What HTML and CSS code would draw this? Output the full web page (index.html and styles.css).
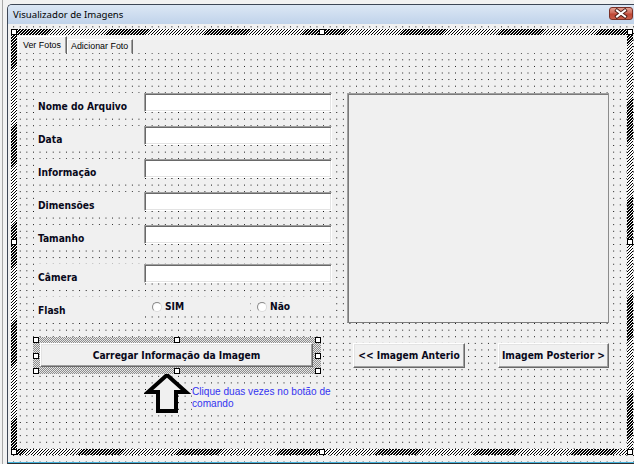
FILE: index.html
```html
<!DOCTYPE html>
<html lang="pt">
<head>
<meta charset="utf-8">
<title>Visualizador de Imagens</title>
<link rel="stylesheet" href="styles.css">
</head>
<body>
<div class="desk">
  <div class="gutter"></div>
  <div class="window">
    <div class="titlebar">
      <span class="title">Visualizador de Imagens</span>
      <div class="close">
        <svg width="22" height="11" viewBox="0 0 22 11">
          <path d="M7 2.5 L15 8.5 M15 2.5 L7 8.5" stroke="#4a1c16" stroke-width="3.8" stroke-linecap="square" fill="none"/>
          <path d="M7 2.5 L15 8.5 M15 2.5 L7 8.5" stroke="#ffffff" stroke-width="2" stroke-linecap="square" fill="none"/>
        </svg>
      </div>
    </div>
    <div class="client grid">
      <div class="mp-sel">
        <span class="h h-tl"></span><span class="h h-tm"></span><span class="h h-tr"></span>
        <span class="h h-ml"></span><span class="h h-mr"></span>
        <span class="h h-bl"></span><span class="h h-bm"></span><span class="h h-br"></span>
        <div class="mp">
          <div class="tabs">
            <div class="tab tab-active">Ver Fotos</div>
            <div class="tab tab-add">Adicionar Foto</div>
          </div>
          <div class="page grid">
            <div class="col-left">
              <div class="row"><div class="lbl">Nome do Arquivo</div><div class="txt"></div></div>
              <div class="row"><div class="lbl">Data</div><div class="txt"></div></div>
              <div class="row"><div class="lbl">Informação</div><div class="txt"></div></div>
              <div class="row"><div class="lbl">Dimensões</div><div class="txt"></div></div>
              <div class="row"><div class="lbl">Tamanho</div><div class="txt"></div></div>
              <div class="row row-cam"><div class="lbl">Câmera</div><div class="txt"></div></div>
              <div class="row"><div class="lbl">Flash</div>
                <div class="opts">
                  <div class="opt opt-sim"><span class="radio"></span>SIM</div>
                  <div class="opt opt-nao"><span class="radio"></span>Não</div>
                </div>
              </div>
              <div class="btn-sel">
                <span class="h h-tl"></span><span class="h h-tm"></span><span class="h h-tr"></span>
                <span class="h h-ml"></span><span class="h h-mr"></span>
                <span class="h h-bl"></span><span class="h h-bm"></span><span class="h h-br"></span>
                <div class="btn btn-load">Carregar Informação da Imagem</div>
              </div>
              <div class="hint">
                <svg class="arrow" width="48" height="44" viewBox="0 0 48 44">
                  <polygon points="23,4 42,21 32,21 32,40 14,40 14,21 4,21" fill="#f0f0f0" stroke="#000" stroke-width="4" stroke-linejoin="miter"/>
                </svg>
                <div class="note">Clique duas vezes no botão de comando</div>
              </div>
            </div>
            <div class="col-right">
              <div class="picture"></div>
              <div class="nav">
                <div class="btn btn-prev">&lt;&lt; Imagem Anterio</div>
                <div class="btn btn-next">Imagem Posterior &gt;</div>
              </div>
            </div>
          </div>
        </div>
      </div>
    </div>
  </div>
</div>
</body>
</html>
```
FILE: styles.css
```css
* { box-sizing: border-box; }
html, body { margin: 0; padding: 0; }
body {
  width: 634px;
  height: 464px;
  overflow: hidden;
  background: #f2f2f2;
  font-family: "Liberation Sans", Arial, sans-serif;
  color: #000;
}
.desk {
  display: flex;
  width: 634px;
  height: 464px;
  background: #f2f2f2;
}
.gutter {
  flex: none;
  width: 5px;
  margin-left: 2px;
  border-left: 1px solid #a7a7a7;
}
.window {
  flex: none;
  width: 627px;
  height: 460px;
  margin-top: 4px;
  border-top: 1px solid #3e4756;
  border-left: 1px solid #3e4756;
  border-bottom: 1px solid #2e2e2e;
  border-top-left-radius: 5px;
  background: #c9daee;
  display: flex;
  flex-direction: column;
  overflow: hidden;
}
.titlebar {
  flex: none;
  height: 19px;
  display: flex;
  justify-content: space-between;
  align-items: flex-start;
  padding-left: 5px;
  background: linear-gradient(#dce7f5, #c0d3ea);
}
.title {
  font-family: "Noto Sans", "Liberation Sans", sans-serif;
  font-size: 9.6px;
  line-height: 20px;
  white-space: nowrap;
}
.close {
  width: 24px;
  height: 13px;
  margin: 2px 1px 0 0;
  border: 1px solid #7a3026;
  border-radius: 3px;
  background: linear-gradient(#e3a193, #cf6a59 45%, #bf4634 55%, #c85e4a);
  display: flex;
  align-items: center;
  justify-content: center;
}
.close svg { display: block; }

.grid {
  background-color: #f0f0f0;
  background-image:
    linear-gradient(90deg, transparent 1px, #f0f0f0 1px),
    linear-gradient(#000 1px, transparent 1px);
  background-size: 6.6px 6.6px;
  background-attachment: fixed;
}
.client {
  flex: none;
  height: 439px;
  border-bottom: 1px solid #45b2dc;
  padding: 5px 0 0 3px;
}
.mp-sel {
  position: relative;
  width: 622px;
  height: 426px;
  padding: 6px;
  background: repeating-linear-gradient(135deg, #000 0 1px, #fff 1px 2.1px);
}
.h {
  position: absolute;
  width: 6px;
  height: 6px;
  background: #fff;
  border: 1px solid #000;
  z-index: 2;
}
.h-tl { left: 0; top: 0; }
.h-tm { left: calc(50% - 3px); top: 0; }
.h-tr { right: 0; top: 0; }
.h-ml { left: 0; top: calc(50% - 3px); }
.h-mr { right: 0; top: calc(50% - 3px); }
.h-bl { left: 0; bottom: 0; }
.h-bm { left: calc(50% - 3px); bottom: 0; }
.h-br { right: 0; bottom: 0; }

.mp {
  width: 610px;
  height: 414px;
  display: flex;
  flex-direction: column;
  background: #f0f0f0;
}
.tabs {
  flex: none;
  height: 18px;
  display: flex;
  align-items: flex-end;
  padding-left: 1px;
}
.tab {
  font-size: 8.9px;
  white-space: nowrap;
  border-top: 1px solid #fff;
  border-left: 1px solid #fff;
  border-right: 1px solid #696969;
  box-shadow: inset -1px 0 0 #a0a0a0;
}
.tab-active {
  width: 49px;
  height: 17px;
  padding: 3px 0 0 4px;
}
.tab-add {
  width: 66px;
  height: 14px;
  padding: 1px 0 0 3px;
}
.page {
  flex: 1;
  display: flex;
  padding: 40px 0 0 18px;
}

.col-left {
  flex: none;
  width: 298px;
  display: flex;
  flex-direction: column;
  gap: 14px;
}
.row {
  display: grid;
  grid-template-columns: 107px 188px;
  column-gap: 2px;
  height: 19px;
}
.row-cam { margin-top: 6px; }
.lbl, .opt, .btn {
  font-family: "DejaVu Sans Condensed", "DejaVu Sans", sans-serif;
  font-stretch: condensed;
  font-weight: bold;
  font-size: 10.2px;
  white-space: nowrap;
  color: #08081a;
}
.lbl {
  height: 21px;
  background: #f0f0f0;
  padding: 7px 0 0 3px;
  line-height: 13px;
}
.txt {
  height: 19px;
  background: #fff;
  border: 1px solid;
  border-color: #a0a0a0 #fff #fff #a0a0a0;
  box-shadow: inset 1px 1px 0 #696969, inset -1px -1px 0 #e3e3e3;
}
.opts {
  display: flex;
  grid-column: 2 / 3;
}
.opt {
  height: 19px;
  display: flex;
  align-items: center;
  gap: 3px;
  background: #f0f0f0;
}
.opt-sim { margin-left: 1px; width: 102px; flex: none; padding-left: 7px; }
.opt-nao { margin-left: 4px; width: 85px; flex: none; padding-left: 6px; }
.radio {
  flex: none;
  width: 10px;
  height: 10px;
  border-radius: 50%;
  background: radial-gradient(circle at 60% 60%, #fff 50%, #e8e8e8);
  border: 1px solid;
  border-color: #8a8a8a #dcdcdc #dcdcdc #8a8a8a;
}

.btn-sel {
  position: relative;
  margin: 7px 0 0 -2px;
  width: 288px;
  height: 37px;
  padding: 6px 8px 7px 7px;
  background: repeating-conic-gradient(#8c8c8c 0 25%, #e6e6e6 0 50%) 0 0 / 2px 2px;
}
.btn {
  background: #f0f0f0;
  border: 1px solid;
  border-color: #fff #696969 #696969 #fff;
  box-shadow: inset -1px -1px 0 #a0a0a0, inset 1px 1px 0 #e3e3e3;
  display: flex;
  align-items: center;
  justify-content: center;
}
.btn-load { width: 100%; height: 100%; }

.hint {
  display: flex;
  margin-top: -17px;
}
.arrow {
  flex: none;
  display: block;
  margin-left: 109px;
}
.note {
  flex: none;
  width: 143px;
  height: 25px;
  margin-top: 14px;
  padding-top: 1px;
  background: #f0f0f0;
  font-size: 10.1px;
  line-height: 12px;
  color: #3434f0;
}

.col-right {
  flex: none;
  width: 262px;
  margin-left: 14px;
}
.picture {
  height: 230px;
  background: #f0f0f0;
  border: 1px solid;
  border-color: #a0a0a0 #8c8c8c #7c7c7c #a0a0a0;
  box-shadow: inset 1px 1px 0 #7a7a7a;
}
.nav {
  display: flex;
  justify-content: space-between;
  margin-top: 20px;
  padding-left: 6px;
}
.btn-prev { width: 112px; height: 25px; }
.btn-next { width: 111px; height: 25px; }
```
